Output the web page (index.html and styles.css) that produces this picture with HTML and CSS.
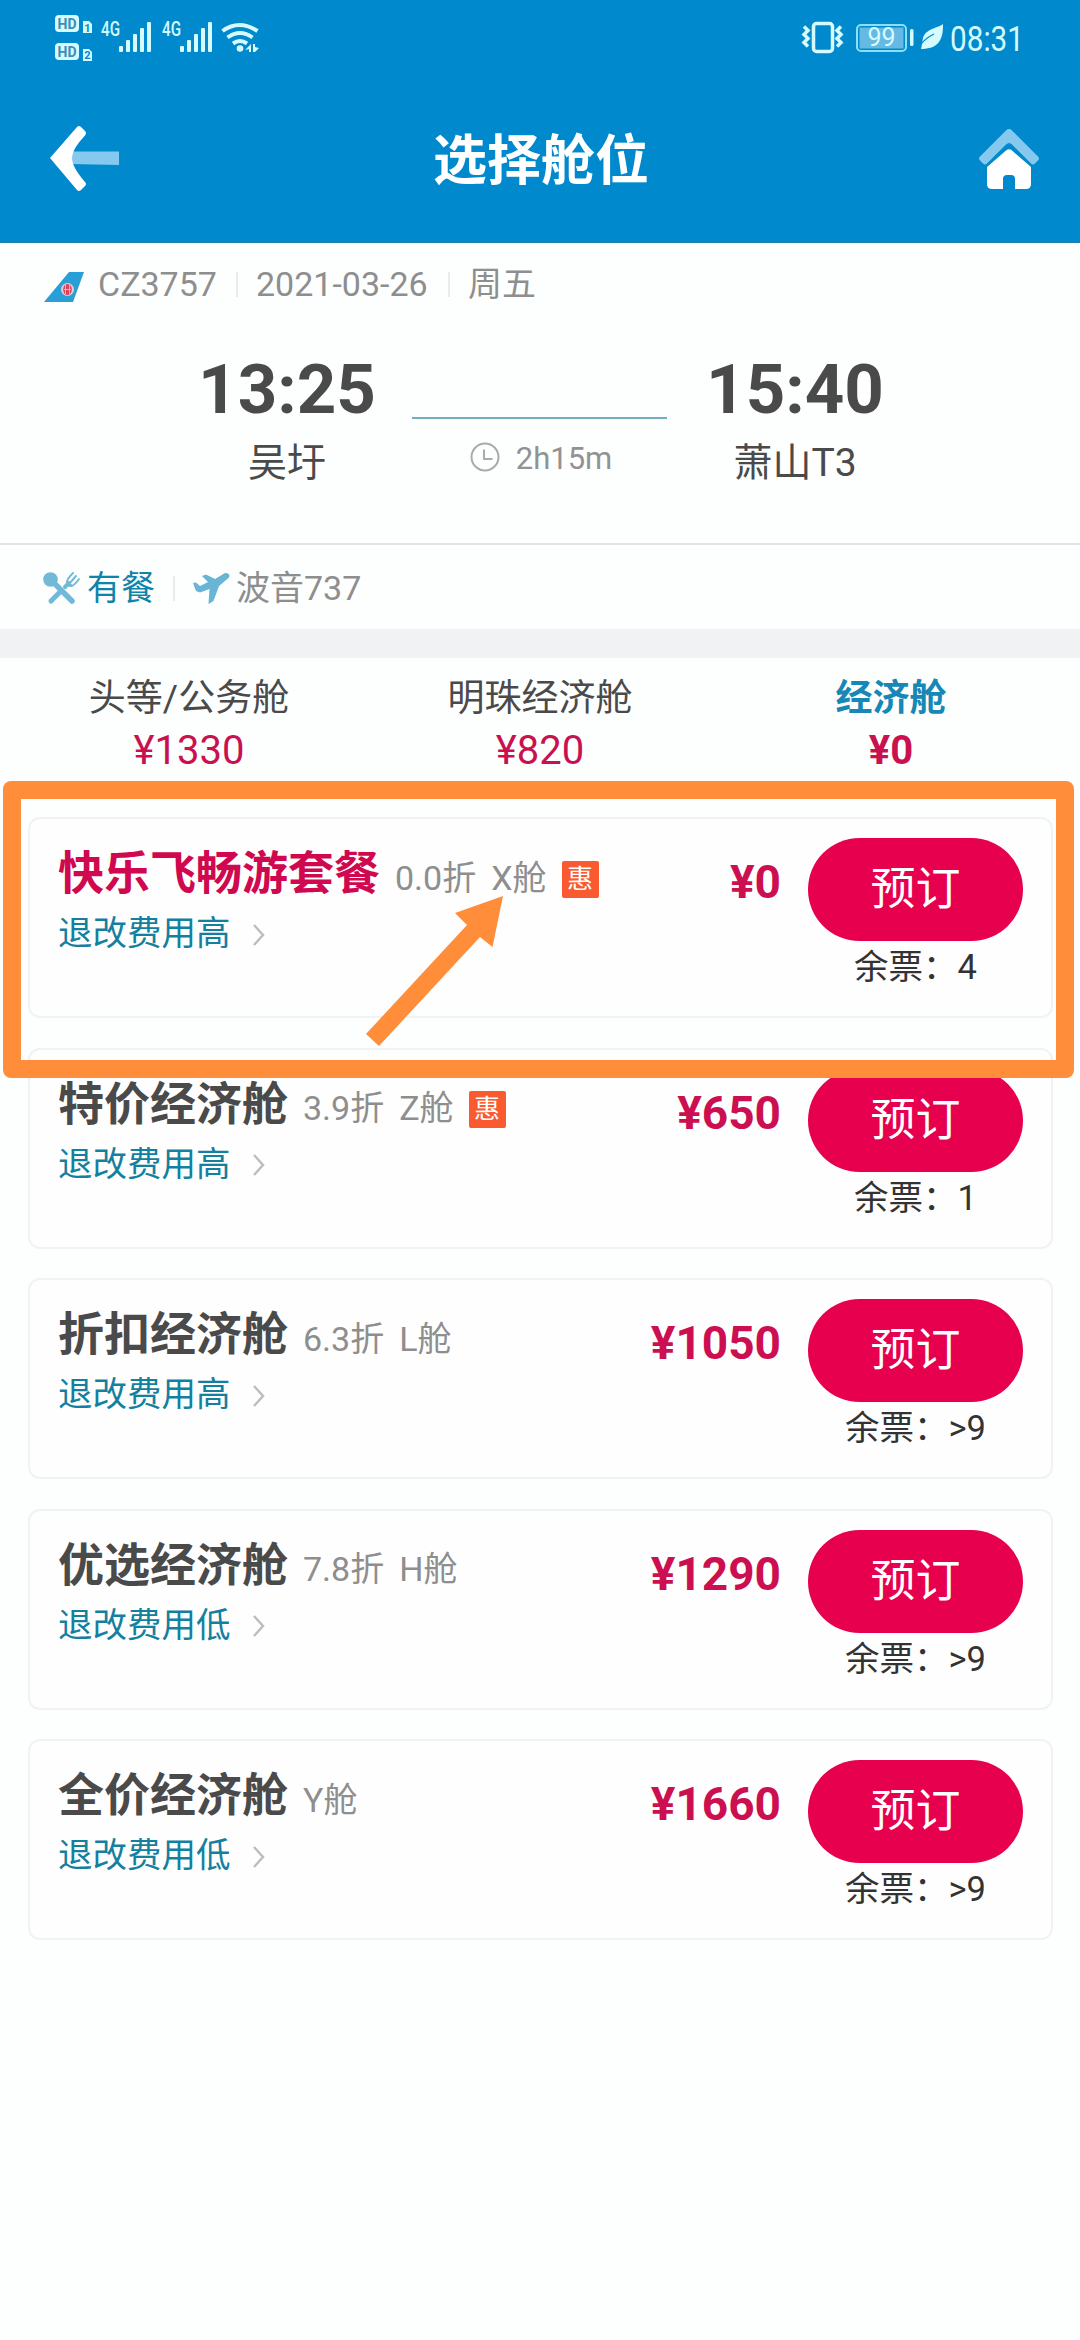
FILE: index.html
```html
<!DOCTYPE html>
<html lang="zh-CN">
<head>
<meta charset="utf-8">
<title>选择舱位</title>
<link rel="stylesheet" href="styles.css">
</head>
<body>
<header class="header">
  <div class="status">
    <svg class="status-left" width="230" height="56" viewBox="0 0 230 56" fill="#d6fbff">
      <rect x="5" y="11" width="24" height="17" rx="4"/>
      <rect x="5" y="39" width="24" height="17" rx="4"/>
      <g class="st-hd"><text x="17" y="25.300" text-anchor="middle" textLength="19" lengthAdjust="spacingAndGlyphs">HD</text><text x="17" y="53.300" text-anchor="middle" textLength="19" lengthAdjust="spacingAndGlyphs">HD</text></g>
      <path d="M33 17h6l3 3v9h-9zM33 45h6l3 3v9h-9z"/>
      <g class="st-n"><text x="37.300" y="27.500" text-anchor="middle">1</text><text x="37.300" y="55.300" text-anchor="middle">2</text></g>
      <g class="st-4g"><text x="51" y="32" textLength="19" lengthAdjust="spacingAndGlyphs">4G</text><text x="112" y="32" textLength="19" lengthAdjust="spacingAndGlyphs">4G</text></g>
      <g id="bars"><rect x="69" y="42" width="4" height="6" rx="1"/><rect x="76" y="36" width="4" height="12" rx="1"/><rect x="83" y="30" width="4" height="18" rx="1"/><rect x="90" y="24" width="4" height="24" rx="1"/><rect x="97" y="18" width="4" height="30" rx="1"/></g>
      <use href="#bars" x="61"/>
      <g fill="none" stroke="#d6fbff" stroke-width="4"><path d="M172.500 27q16.500-12 35 0"/><path d="M177.500 33.500q12.500-9 25 0"/><path d="M183 39.500q7-5 14 0"/></g>
      <circle cx="190" cy="44.500" r="3.300"/>
      <path d="M201 40v8h-2v-3l-4 1zM203 40h2v3l4 1-4 4h-2z"/>
    </svg>
    <svg class="status-right" width="230" height="56" viewBox="0 0 230 56" fill="#d6fbff">
      <rect x="21.500" y="19.500" width="19" height="28" rx="3" fill="none" stroke="#d6fbff" stroke-width="3.500"/>
      <path d="M12 23l4 4-4 4 4 4-4 4 4 4M49 23l-4 4 4 4-4 4 4 4-4 4" fill="none" stroke="#d6fbff" stroke-width="3.500" transform="translate(0 -.5)"/>
      <rect x="65" y="21" width="49" height="26" rx="4" fill="none" stroke="#8ce0f4" stroke-width="2"/>
      <rect x="67.500" y="23.500" width="44" height="21" fill="#65b9e3"/>
      <rect x="118" y="25" width="3.500" height="17" rx="1.500"/>
      <text class="st-bat" x="89.500" y="42" text-anchor="middle" textLength="28" lengthAdjust="spacingAndGlyphs">99</text>
      <path d="M151 20c-4 4-17 4-20 14-1 4-1 8-2 11 8 0 14-2 18-7 4-6 4-12 4-18z" />
      <path d="M129 40q5-6 13-10" stroke="#0089cc" stroke-width="1.300" fill="none"/>
      <text class="st-time" x="158" y="46.500" textLength="74" lengthAdjust="spacingAndGlyphs">08:31</text>
    </svg>
  </div>
  <div class="nav">
    <svg width="70" height="68" viewBox="0 0 70 68"><path d="M20 26.500h49v13.500l-49-1z" fill="#86c9ee"/><path d="M0 33L27 2q2-2 4 0l4 4q2 2 0 4.500Q22 24 22 33t13 24q2 2 0 4l-4 4q-2 2-4 0z" fill="#fff"/></svg>
    <h1 class="nav-title">选择舱位</h1>
    <svg width="60" height="62" viewBox="0 0 60 62"><path d="M27 2.500q3-2.800 6 0l26 26q2 2 0 4l-3 3q-2 2-4 0L33 16.500q-3-3-6 0L8 35.500q-2 2-4 0l-3-3q-2-2 0-4z" fill="#86c9ee"/><path d="M27 22.500q3-2.500 6 0l19 16.500v17q0 5-5 5H36V51q0-4-4-4h-4q-4 0-4 4v10H13q-5 0-5-5V39z" fill="#fff"/></svg>
  </div>
</header>

<section class="flight">
  <div class="flight-meta">
    <svg class="tail" width="40" height="30" viewBox="0 0 40 30"><path d="M25 0h15L29 30H0z" fill="#289fd6"/><ellipse cx="23.500" cy="17.500" rx="6.500" ry="6.500" fill="#e8c9d6"/><ellipse cx="23.500" cy="17.500" rx="4.300" ry="5.500" fill="#d6455c"/><path d="M21.500 13v9M25.500 13v9M20 17.500h7" stroke="#f3c7cf" stroke-width=".8"/></svg>
    <span class="flight-no">CZ3757</span><i class="sep"></i><span class="date">2021-03-26</span><i class="sep"></i><span>周五</span>
  </div>
  <div class="route">
    <div class="stop"><b>13:25</b><span>吴圩</span></div>
    <div class="leg">
      <div class="duration">
        <svg width="30" height="30" viewBox="0 0 30 30" fill="none" stroke="#aaa" stroke-width="2"><circle cx="15" cy="15" r="13.500"/><path d="M14 7.500V17h8.500"/></svg>
        <span>2h15m</span>
      </div>
    </div>
    <div class="stop"><b>15:40</b><span>萧山T3</span></div>
  </div>
</section>

<section class="extras">
  <svg class="meal-icon" width="38" height="34" viewBox="0 0 38 34"><g fill="none" stroke="#72b9d8" stroke-linecap="round"><path d="M12 13L29 30" stroke-width="5.500"/><path d="M8 30l8-8" stroke-width="5"/><path d="M22 16l4-4" stroke-width="4"/><path d="M24 11q0-3 6-9M28 15q3 0 8-7M26 13l7-8" stroke-width="1.900"/><path d="M24.500 11.500q.5 3 3.500 3" stroke-width="3"/></g><circle cx="7.500" cy="8.500" r="7.300" fill="#72b9d8"/></svg>
  <span class="meal">有餐</span><i class="sep"></i>
  <svg class="plane-icon" width="37" height="33" viewBox="0 0 37 33"><path d="M35.500 2q2 1.500 0 4L26 14l-5.500 15-5 3 1-15L7 20.500 3 19 0 11l3-.5 4 3.500 8-4-6-6 4-1.500L22 7l10-6q2-.5 3.500 1z" fill="#68b5d6"/></svg>
  <span>波音737</span>
</section>

<nav class="tabs">
  <div class="tab"><span>头等/公务舱</span><em>¥1330</em></div>
  <div class="tab"><span>明珠经济舱</span><em>¥820</em></div>
  <div class="tab tab-active"><span>经济舱</span><em>¥0</em></div>
</nav>

<main class="cabins">
  <article class="card">
    <div class="info"><div class="line"><h2 class="promo">快乐飞畅游套餐</h2><span>0.0折</span><span>X舱</span><i class="badge">惠</i></div><a class="rule">退改费用高<svg width="12" height="24" viewBox="0 0 12 24"><path d="M1 2l9 10-9 10"/></svg></a></div>
    <b class="price">¥0</b>
    <div class="action"><button>预订</button><span>余票：4</span></div>
  </article>
  <article class="card">
    <div class="info"><div class="line"><h2>特价经济舱</h2><span>3.9折</span><span>Z舱</span><i class="badge">惠</i></div><a class="rule">退改费用高<svg width="12" height="24" viewBox="0 0 12 24"><path d="M1 2l9 10-9 10"/></svg></a></div>
    <b class="price">¥650</b>
    <div class="action"><button>预订</button><span>余票：1</span></div>
  </article>
  <article class="card">
    <div class="info"><div class="line"><h2>折扣经济舱</h2><span>6.3折</span><span>L舱</span></div><a class="rule">退改费用高<svg width="12" height="24" viewBox="0 0 12 24"><path d="M1 2l9 10-9 10"/></svg></a></div>
    <b class="price">¥1050</b>
    <div class="action"><button>预订</button><span>余票：&gt;9</span></div>
  </article>
  <article class="card">
    <div class="info"><div class="line"><h2>优选经济舱</h2><span>7.8折</span><span>H舱</span></div><a class="rule">退改费用低<svg width="12" height="24" viewBox="0 0 12 24"><path d="M1 2l9 10-9 10"/></svg></a></div>
    <b class="price">¥1290</b>
    <div class="action"><button>预订</button><span>余票：&gt;9</span></div>
  </article>
  <article class="card">
    <div class="info"><div class="line"><h2>全价经济舱</h2><span>Y舱</span></div><a class="rule">退改费用低<svg width="12" height="24" viewBox="0 0 12 24"><path d="M1 2l9 10-9 10"/></svg></a></div>
    <b class="price">¥1660</b>
    <div class="action"><button>预订</button><span>余票：&gt;9</span></div>
  </article>
  <!-- highlight drawn over the first fare -->
  <div class="mark">
    <svg class="mark-arrow" width="140" height="154" viewBox="0 0 140 154"><path d="M138 1L90 18l12 12L1 139l13 12L115 42l12.500 10z" fill="#ff8d3a"/></svg>
  </div>
</main>
</body>
</html>
```
FILE: styles.css
```css
* { box-sizing: border-box; margin: 0; padding: 0; }
body {
  width: 1080px;
  min-height: 2340px;
  background: #fdfefe;
  color: #4a4a4a;
  font-family: Roboto, "Noto Sans CJK SC", sans-serif;
  font-size: 34px;
  line-height: 40px;
}
svg { display: block; flex: none; }
i, em { font-style: normal; }

.header { height: 243px; background: #0089cc; border-bottom: 1px solid #1c7fa8; }
.status { display: flex; justify-content: space-between; padding: 4px 58px 0 50px; height: 64px; }
.status-left, .status-right { overflow: visible; }
.st-hd { font-size: 15px; font-weight: 700; fill: #3a8fb8; }
.st-n { font-size: 11px; font-weight: 700; fill: #0089cc; }
.st-4g { font-size: 21px; font-weight: 500; }
.st-bat { font-size: 26px; }
.st-time { font-size: 35px; }
.nav { display: flex; align-items: center; justify-content: space-between; padding: 0 41px 0 50px; height: 190px; }
.nav-title { font-size: 54px; line-height: 70px; font-weight: 700; color: #fff; padding: 5px 8px 0 0; margin-left: -9px; }

.flight { height: 302px; padding: 21px 44px 0; border-bottom: 2px solid #e1e4e5; }
.flight-meta { display: flex; align-items: center; height: 40px; color: #8e8e8e; }
.tail { margin: 5px 14px 0 0; }
.flight-no { width: 120px; }
.date { width: 174px; }
.sep { width: 2px; height: 25px; background: #e8eaeb; margin: 0 18px; }
.route { display: grid; grid-template-columns: 250px 255px 256px; padding: 46px 0 0 118px; }
.stop { display: flex; flex-direction: column; align-items: center; }
.stop b { font-size: 69px; line-height: 80px; }
.stop span { font-size: 39px; line-height: 50px; margin-top: 8px; }
.leg { padding-top: 67px; }
.duration { display: flex; justify-content: center; gap: 16px; height: 56px; padding: 23px 0 0 3px; border-top: 2px solid #6eb0bd; font-size: 31px; line-height: 34px; color: #929292; }

.extras { display: flex; align-items: center; height: 84px; padding: 2px 43px 0; color: #8e8e8e; }
.meal-icon { margin-right: 6px; }
.meal { color: #0f84aa; }
.plane-icon { margin-right: 6px; }

.tabs { display: grid; grid-template-columns: repeat(3, 351px); justify-content: center; height: 188px; padding-top: 16px; border-top: 29px solid #f1f2f4; }
.tab { display: flex; flex-direction: column; align-items: center; }
.tab span { font-size: 37px; line-height: 50px; }
.tab em { font-size: 40px; line-height: 54px; color: #c9114f; }
.tab-active { font-weight: 700; }
.tab-active span { color: #1787b5; }

.cabins { position: relative; padding: 0 27px 0 28px; display: flex; flex-direction: column; gap: 29.500px; }
.card { display: flex; align-items: flex-start; height: 201px; padding: 19px 28px 0 28px; border: 2px solid #f0f2f3; border-radius: 12px; background: #fefefe; }
.info { flex: 1; padding-top: 7px; }
.line { display: flex; align-items: center; height: 56px; color: #8e8e8e; }
.line h2 { font-size: 46px; line-height: 56px; font-weight: 700; color: #4a4a4a; margin-right: 15px; }
.line h2.promo { color: #d0084f; }
.line span { margin-right: 15px; padding-top: 9px; }
.line .badge { width: 37px; height: 37px; margin-top: 12px; border-radius: 2px; background: #f95a2f; color: #fff; font-size: 26px; line-height: 37px; text-align: center; }
.rule { display: flex; align-items: center; gap: 22px; height: 40px; margin-top: 12px; font-size: 34.500px; color: #14809f; }
.rule svg { fill: none; stroke: #bdbdbd; stroke-width: 2.500; margin-top: 3px; }
.price { font-size: 46px; line-height: 54px; padding-top: 17px; margin-right: 27px; color: #cc0f50; }
.action { width: 215px; display: flex; flex-direction: column; align-items: center; }
.action button { width: 215px; height: 103px; border: 0; border-radius: 52px; background: #e6004d; color: #fff; font: inherit; font-size: 45px; line-height: 103px; }
.action span { font-size: 34.500px; line-height: 40px; margin-top: 6px; color: #333; }

.mark { position: absolute; left: 3px; top: -36px; width: 1071px; height: 297px; border: 18px solid #ff8d3a; border-radius: 8px; }
.mark-arrow { position: absolute; left: 344px; top: 96px; }
```
